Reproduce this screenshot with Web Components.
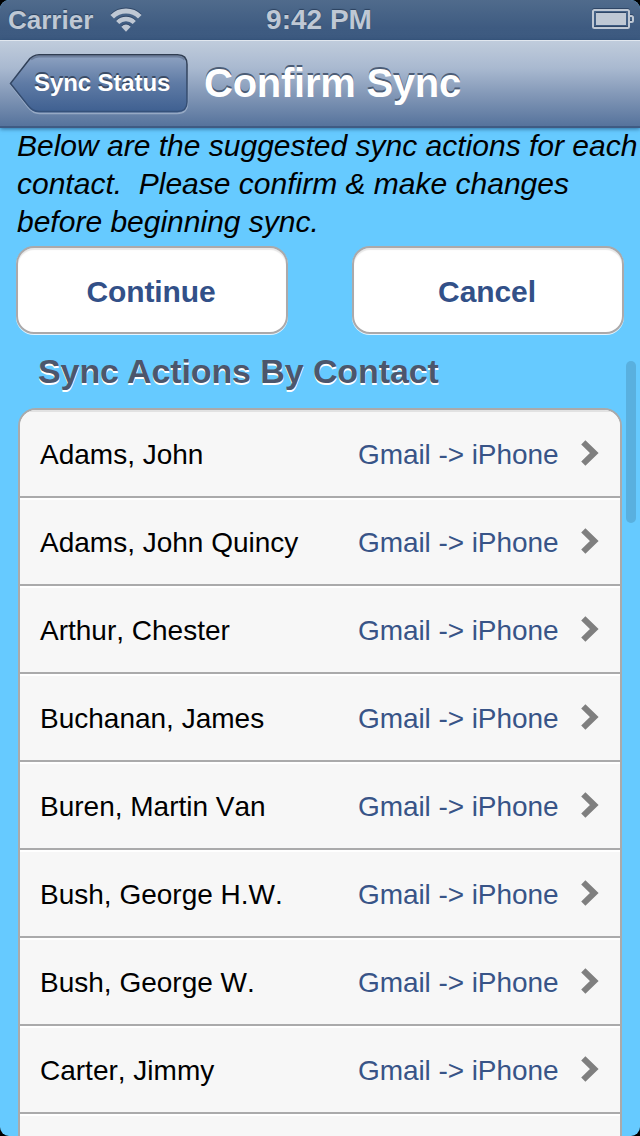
<!DOCTYPE html>
<html lang="en">
<head>
<meta charset="utf-8">
<title>Confirm Sync</title>
<style>
html, body { margin: 0; background: #000; }
body { width: 640px; height: 1136px; overflow: hidden; font-family: "Liberation Sans", Arial, sans-serif; }
</style>
</head>
<body>
<sync-app></sync-app>
<script>
const define = (name, html, setup) => {
  const template = document.createElement('template');
  template.innerHTML = html;
  customElements.define(name, class extends HTMLElement {
    constructor() {
      super();
      this.attachShadow({ mode: 'open' }).append(template.content.cloneNode(true));
    }
    connectedCallback() { if (setup) setup(this.shadowRoot, this); }
  });
};

define('status-bar', `
<style>
:host { display: grid; grid-template-columns: 1fr auto 1fr; align-items: center; height: 40px; box-sizing: border-box; padding: 0 6px 0 8px;
  background: linear-gradient(#506b8c, #3e5b81 70%, #3d5a80); color: #bfc8d4; font-weight: bold; text-shadow: 0 -1px 1px #2b415f; }
.left { display: flex; align-items: center; gap: 17px; font-size: 26px; line-height: 40px; }
.time { font-size: 28px; line-height: 38px; margin-right: 4px; }
.right { display: flex; justify-content: flex-end; }
svg { display: block; filter: drop-shadow(0 -1px 0 #2f4666); }
</style>
<div class="left"><span>Carrier</span>
<svg width="32" height="24" viewBox="0 0 32 24"><g fill="none" stroke="#bfc8d4"><path d="M2.200 8.700A19.500 19.500 0 0 1 29.800 8.700" stroke-width="5"/><path d="M7.700 14.500A11.700 11.700 0 0 1 24.300 14.500" stroke-width="4.400"/></g><path d="M11.300 18.800Q16 14.400 20.700 18.800L16 23.800Z" fill="#bfc8d4"/></svg></div>
<span class="time">9:42 PM</span>
<div class="right"><svg width="42" height="22" viewBox="0 0 42 22"><rect x="1" y="1" width="36" height="18" rx="1.500" fill="none" stroke="#bfc8d4" stroke-width="2"/><rect x="4" y="4" width="30" height="12" fill="#bfc8d4"/><path d="M38 7h1.500q1.500 0 1.500 1.500v3q0 1.500-1.500 1.500H38" fill="none" stroke="#bfc8d4" stroke-width="2"/></svg></div>`);

define('back-button', `
<style>
:host { display: grid; width: 180px; height: 62px; flex: none; }
svg, span { grid-area: 1 / 1; }
svg { display: block; }
span { padding-left: 25px; font: bold 24px/58px "Liberation Sans", Arial, sans-serif; letter-spacing: -.1px; color: #fff; text-shadow: 0 -2px 0 #3b4c66; white-space: nowrap; }
</style>
<svg width="180" height="62" viewBox="0 0 180 62">
<defs><linearGradient id="fill" x1="0" y1="0" x2="0" y2="1"><stop stop-color="#8fa3c2"/><stop offset=".5" stop-color="#5f7ba5"/><stop offset="1" stop-color="#3f6091"/></linearGradient>
<linearGradient id="edge" x1="0" y1="0" x2="0" y2="1"><stop stop-color="#303d51"/><stop offset="1" stop-color="#35517a"/></linearGradient></defs>
<path d="M2 31L19 9Q24 2.500 30.500 2.500H168Q178.500 2.500 178.500 13V49Q178.500 59.500 168 59.500H30.500Q24 59.500 19 53Z" fill="none" stroke="#a9b9d0" stroke-opacity=".7" stroke-width="1.500"/>
<path d="M1.500 29.500L19 7Q23.500 .8 30 .8H168.500Q178 .8 178 10.500V48Q178 57.500 168.500 57.500H30Q23.500 57.500 19 51.500Z" fill="url(#fill)" stroke="url(#edge)" stroke-width="1.500"/>
<path d="M22 5.500Q25.500 2.500 30 2.500H168Q173 2.500 175.500 5.500" fill="none" stroke="#54657f" stroke-opacity=".55" stroke-width="2"/>
</svg><span><slot></slot></span>`);

define('nav-bar', `
<style>
:host { display: flex; height: 88px; box-sizing: border-box; padding: 13px 9px 0; gap: 15px; position: relative; z-index: 1;
  border-top: 1px solid #e1e7ef; border-bottom: 2px solid #3f5b83;
  background: linear-gradient(#c0ccdc, #a9b9d0 32%, #8499b8 62%, #56739c);
  box-shadow: 0 1px 4px rgba(20,60,100,.65); }
h1 { margin: 0; font: bold 40px/58px "Liberation Sans", Arial, sans-serif; letter-spacing: -.25px; color: #fff; text-shadow: 0 -2px 0 #4c5d76; white-space: nowrap; }
</style>
<back-button><slot name="back"></slot></back-button><h1><slot></slot></h1>`);

define('push-button', `
<style>
:host { display: block; width: 272px; height: 88px; box-sizing: border-box; border: 2px solid #aba9aa; border-radius: 18px; background: #fff;
  box-shadow: 0 1px 0 #e4f4ff, inset 0 2px 1px #e8e8e8; text-align: center; font: bold 30px/88px "Liberation Sans", Arial, sans-serif; letter-spacing: -.1px; text-indent: -2px; color: #325088; }
</style><slot></slot>`);

define('contact-row', `
<style>
:host { display: flex; align-items: center; height: 88px; box-sizing: border-box; padding: 4px 21px 0 20px; border-bottom: 2px solid #aaaaab;
  background: linear-gradient(#fff 2px, #f7f7f7 2px); font-size: 28px; font-kerning: none; color: #000; white-space: nowrap; }
:host(:first-child) { background: linear-gradient(#e2e2e2 2px, #f7f7f7 2px); }
.name { flex: 1; }
.action { color: #385487; letter-spacing: -.07px; }
svg { display: block; margin-left: 22.500px; margin-top: -5px; }
</style>
<span class="name"><slot></slot></span><span class="action">Gmail -&gt; iPhone</span>
<svg width="18" height="26" viewBox="0 0 18 26"><path d="M2.300 2.300L13.300 13L2.300 23.700" fill="none" stroke="#7f7f7f" stroke-width="6"/></svg>`);

define('contact-list', `
<style>
:host { display: block; width: 604px; height: 728px; box-sizing: border-box; margin-left: 18px; overflow: hidden;
  border: 2px solid #aaaaab; border-bottom: 0; border-radius: 18px 18px 0 0; background: #f7f7f7; }
</style><slot></slot>`);

define('sync-app', `
<style>
:host { display: flex; flex-direction: column; position: relative; width: 640px; height: 1136px; overflow: hidden; border-radius: 9px; background: #66caff; }
p { margin: -1px 0 0; padding-left: 17px; font: italic 30px/38px "Liberation Sans", Arial, sans-serif; white-space: pre; color: #000; height: 119px; }
.buttons { display: flex; justify-content: space-between; padding: 0 16px; }
h2 { margin: 0; height: 74px; padding-left: 38px; font: bold 34px/74px "Liberation Sans", Arial, sans-serif; letter-spacing: -.1px; color: #4c566c; text-shadow: 0 2px 0 #fff; }
.scroll { position: absolute; left: 626px; top: 361px; width: 10px; height: 162px; border-radius: 5px; background: #59b0df; }
.rest { height: 22px; background: linear-gradient(#fff 2px, #f7f7f7 2px); }
</style>
<status-bar></status-bar>
<nav-bar><span slot="back">Sync Status</span>Confirm Sync</nav-bar>
<p>Below are the suggested sync actions for each
contact.  Please confirm &amp; make changes
before beginning sync.</p>
<div class="buttons"><push-button>Continue</push-button><push-button>Cancel</push-button></div>
<h2>Sync Actions By Contact</h2>
<contact-list></contact-list>
<div class="scroll"></div>`, root => {
  const list = root.querySelector('contact-list');
  const names = ['Adams, John', 'Adams, John Quincy', 'Arthur, Chester', 'Buchanan, James', 'Buren, Martin Van', 'Bush, George H.W.', 'Bush, George W.', 'Carter, Jimmy'];
  for (const name of names) {
    const row = document.createElement('contact-row');
    row.textContent = name;
    list.append(row);
  }
  const rest = document.createElement('div');
  rest.className = 'rest';
  list.append(rest);
});
</script>
</body>
</html>
